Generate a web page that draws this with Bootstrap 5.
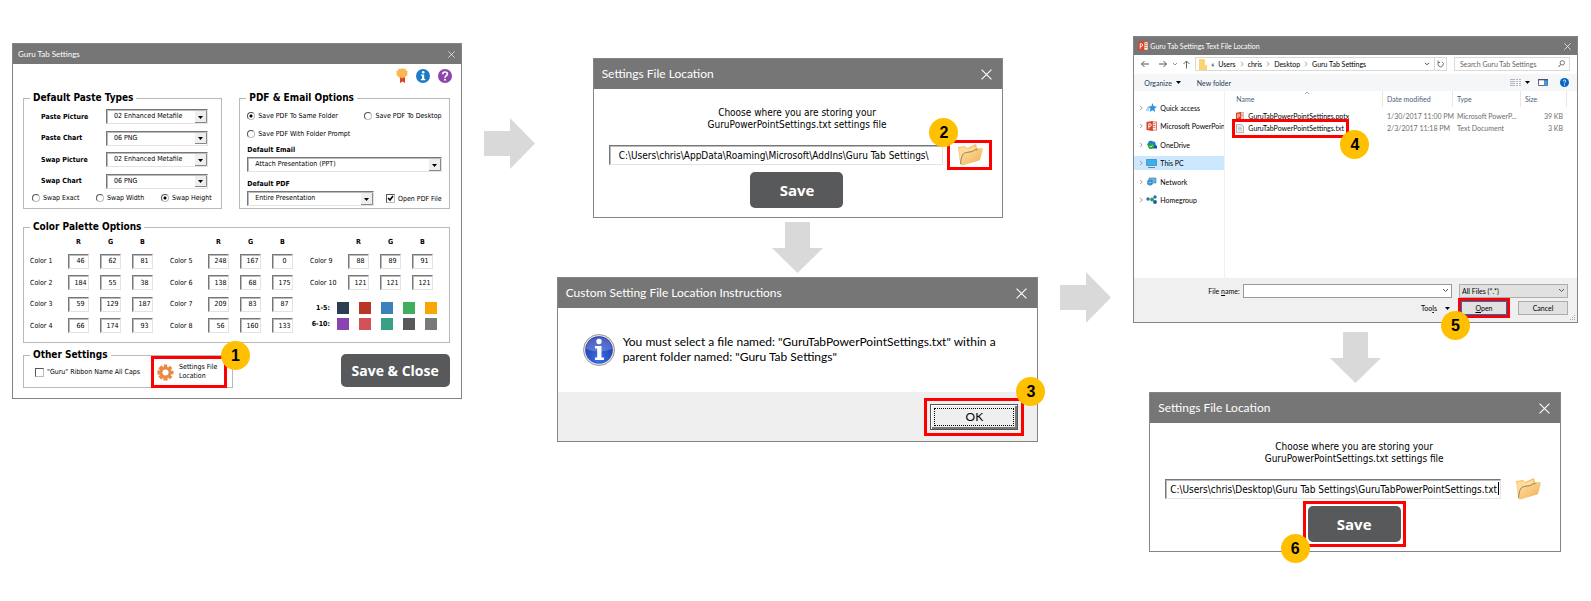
<!DOCTYPE html>
<html lang="en">
<head>
<meta charset="utf-8">
<meta name="viewport" content="width=device-width, initial-scale=1">
<title>Settings file location – steps</title>
<link href="https://cdn.jsdelivr.net/npm/bootstrap@5.3.0/dist/css/bootstrap.min.css" rel="stylesheet">
<style>
:root{--ui:Lato,"Open Sans",sans-serif;--form:"DejaVu Sans Condensed","DejaVu Sans",sans-serif;--bar:#767676}
body{background:#fff;color:#000;font-family:var(--form);font-size:10px;line-height:12px}
svg{display:block;flex:none}
button,input,select{font:inherit;color:inherit;padding:0;border:0;background:none;border-radius:0}
a{color:inherit;text-decoration:none}
.flow{display:grid;grid-template-columns:449fr 51px 481fr 51px 444fr;column-gap:22px;align-items:start;padding:36px 13px 20px 12px}
.from-1{margin-top:7px}.from-a{margin-top:82px}.from-2{margin-top:22px}.from-b{margin-top:236px}
.win{border:1px solid #848484;background:#fff;min-width:0}
.win-bar{background:var(--bar);color:#fff;font-family:var(--ui);font-size:12px;height:30px;padding:0 10px 0 8px}
.win-bar.small-bar{font-size:8px;height:20px;padding:0 6px 0 5px}
.flagged{outline:3px solid #f00}
.step{position:absolute;z-index:2;width:29px;height:29px;border-radius:50%;background:#ffc000;color:#000;font:bold 16px/29px "Liberation Sans",sans-serif;text-align:center}
.step-1{right:-26px;top:-18px}.step-2{left:-21px;top:-25px}.step-3{right:-27px;top:-27px}
.step-4{right:-23px;bottom:-24px}.step-5{left:-20px;bottom:-25px}.step-6{left:-27px;bottom:-21px}
.dark-btn{background:#58595b;color:#fff;border-radius:5px;font:bold 15px/20px "Open Sans",sans-serif}
.sunk{border:1px solid #e3e3e3;border-top-color:#777;border-left-color:#777;box-shadow:inset 1px 1px 0 #bbb;background-color:#fff}

/* main settings form */
.tiny{font-size:7px;line-height:10px}
.tiny fieldset{border:1px solid #b9b9b9;min-width:0}
.tiny legend{float:none;width:auto;margin:0 0 0 6px;padding:0 3px;font-size:10px;line-height:14px;font-weight:bold}
.settings-body{padding:4px 11px 10px 10px}
.top-icons{height:15px;gap:8px;margin:0 -2px 8px 0}
.two-sets{display:grid;grid-template-columns:199fr 210fr;gap:17px}
.tiny select{appearance:none;height:15px;padding:0 14px 0 7px;line-height:11px;background:#fff url("data:image/svg+xml,%3Csvg xmlns='http://www.w3.org/2000/svg' width='12' height='12'%3E%3Cpath fill='%23eee' d='M0 0h12v12H0z'/%3E%3Cpath fill='none' stroke='%23888' d='M0 11.500h11.500V0'/%3E%3Cpath d='M3 5h5L5.500 8z'/%3E%3C/svg%3E") right center no-repeat}
.paste-grid{display:grid;grid-template-columns:65px 101fr 13fr;height:80px;align-content:space-between;align-items:center;padding:0 0 0 17px;margin-top:4px}
.paste-grid select{grid-column:2}
.paste-grid label{grid-column:1;font-weight:bold}
.swap-row{display:grid;grid-template-columns:64px 65px auto;padding:4px 0 4px 8px}
.opt{display:flex;align-items:center;gap:3px;white-space:nowrap}
.opt input{appearance:none;width:8px;height:8px;flex:none;border:1px solid #bbb;border-top-color:#555;border-left-color:#555;margin:0}
.opt input[type=radio]{border-radius:50%}
.opt input[type=radio]:checked{background:radial-gradient(circle,#000 0 1px,#fff 2px)}
.opt input[type=checkbox]{width:9px;height:9px}
.opt input[type=checkbox]:checked{background:url("data:image/svg+xml,%3Csvg xmlns='http://www.w3.org/2000/svg' viewBox='0 0 7 7'%3E%3Cpath fill='none' stroke='%23000' stroke-width='1.500' d='M1 3l2 2 3-4'/%3E%3C/svg%3E")}
.pdf-set{padding:6px 7px 2px}
.pdf-set .prompt{margin:8px 0 6px}
.pdf-set .control{margin-top:2px}
.pdf-set .next{margin-top:7px}
.palette-set{margin-top:11px}
.palette{display:flex;gap:17px;padding:3px 6px 8px}
.bottom-row{margin-top:5px}
.rgb{display:grid;grid-template-columns:27px repeat(3,21px);column-gap:11px;grid-auto-rows:15px;grid-template-rows:10px;height:96px;align-content:space-between;align-items:center;white-space:nowrap}
.rgb.short{height:53px}
.rgb b{text-align:center}
.rgb input{width:21px;height:15px;padding:0 0 0 4px;text-align:center}
.swatches{display:flex;align-items:center;gap:10px;height:12px;margin-bottom:4px}
.swatches b{width:20px;margin-right:-3px;text-align:right;white-space:nowrap}
.swatches i{width:12px;height:12px;flex:none}
.other-set{width:210px}
.other-row{height:20px;margin-bottom:5px;padding:0 8px 0 11px}
.gear-btn{width:70px;height:26px;gap:5px;padding-left:3px;line-height:9px;text-align:left;background:#fff}
.save-close{width:109px;height:33px;margin-top:6px;font-size:14px}

/* path dialogs */
.in-2{margin:0 35px 0 36px}.in-3{margin:0 17px 0 16px}
.path-body{padding:18px 13px 9px 11px}
.path-row{margin:12px 0 5px 4px;gap:7px}
.path-row input{width:100%;height:20px;padding:0 3px 0 9px;display:block}
.path-row input.scrolled{padding:0 3px;text-align:right}
.caret-bar{position:absolute;right:2px;top:3px;width:1px;height:13px;background:#000}
.folder-btn{width:39px;height:24px;padding-left:7px;display:block}
.save-btn{width:93px;height:36px}
.down{margin:4px auto}
.down.far{margin:9px auto}

/* message box */
.msg{font-family:var(--ui);font-size:12px;line-height:15px}
.msg-body{padding:26px 25px;gap:8px;height:84px}
.msg-foot{background:#efefef;padding:12px 19px 11px}
.ok-btn{width:88px;height:26px;background:#efefef;border:1px solid #555;box-shadow:inset 1px 1px 0 #fff,inset -2px -2px 0 #777;padding:3px}
.ok-btn span{display:block;border:1px dotted #000;line-height:16px}

/* file picker */
.picker{font-family:var(--ui);font-size:7px;line-height:10px}
.picker .win-bar{height:18px;padding:0 6px 0 4px;gap:2px}
.nav-row{height:19px;padding:0 7px 1px 6px;gap:4px}
.addr{height:14px;border:1px solid #d9d9d9;padding-left:3px;gap:4px;min-width:0}
.addr .reload{border-left:1px solid #d9d9d9;width:12px;height:12px;display:grid;place-items:center}
.find{width:116px;height:14px;border:1px solid #d9d9d9;margin-left:3px;padding:0 4px 0 5px}
.find input{width:90px;color:#666}
.find input::placeholder{color:#666;opacity:1}
.tools{height:17px;background:#f5f6f7;padding:0 8px 0 10px;color:#1e395b}
.side{width:91px;border-right:1px solid #f0f0f0;padding-top:10px}
.side ul{height:106px;margin:0;padding:0}
.side a{height:14px;padding-left:5px;gap:4px;white-space:nowrap;overflow:hidden;line-height:14px}
.side a.here{background:#cce8ff}
.side a svg:nth-child(2){margin:0 -1px 0 -1px}
.pane{min-height:187px;padding-right:10px}
.files{width:100%;table-layout:fixed;border-collapse:separate;border-spacing:0;color:#6d6d6d}
.files th{font-weight:normal;color:#4c607a;height:16px;padding:0 0 0 4px;border-right:1px solid #e8e8e8;position:relative}
.files th:first-child,.files td:first-child{padding-left:11px}
.files td{height:12px;padding:0 4px;white-space:nowrap}
.files tbody tr:first-child td{height:15px;padding-top:3px}
.files a{color:#000;gap:4px}
.sort-mark{position:absolute;left:79px;top:0}
.row-flag{position:absolute;left:7px;top:-3px;width:117px;height:19px;border:3px solid #f00}
.pick-foot{background:#f0f0f0;padding:6px 9px 6px;height:44px}
.pick-foot input,.pick-foot select{height:14px;border:1px solid #999;background-color:#fff}
.name-line{gap:3px;padding-left:65px}
.name-line select,.name-line input{appearance:none;background-image:url("data:image/svg+xml,%3Csvg xmlns='http://www.w3.org/2000/svg' width='10' height='6'%3E%3Cpath fill='none' stroke='%23555' d='M2 1l2.500 2.500L7 1'/%3E%3C/svg%3E");background-repeat:no-repeat;background-position:right center}
.name-line select{width:109px;margin-left:4px;padding-left:2px;background-color:#e1e1e1;border-color:#adadad}
.act-line{gap:11px;margin-top:3px}
.act-line button.plain{width:46px;height:14px;background:#e1e1e1;border:1px solid #adadad;line-height:12px}
.act-line button.go{border-color:#0078d7}
.act-line button.wide{width:50px}
.grip{position:absolute;right:1px;bottom:1px}
</style>
</head>
<body>
<svg width="0" height="0" class="position-absolute" aria-hidden="true">
  <defs>
    <linearGradient id="paper" x1="0" y1="0" x2="1" y2="1"><stop offset="0" stop-color="#ffe3a6"/><stop offset="1" stop-color="#f0ae50"/></linearGradient>
    <radialGradient id="ball" cx=".5" cy=".8" r=".9"><stop offset="0" stop-color="#3d74e8"/><stop offset="1" stop-color="#12259b"/></radialGradient>
    <symbol id="x" viewBox="0 0 10 10"><path d="M.5.5l9 9M9.500.5l-9 9" stroke="#fff" fill="none"/></symbol>
    <symbol id="folder" viewBox="0 0 26 22">
      <path d="M1 3l7-1 2 2 9-4 1 4 5 .5-3 12-17 5L3 18z" fill="#f5c06c"/>
      <path d="M2 4l6-1 2 2 8-3 1 4-13 3-3 9z" fill="#ffdc98"/>
      <path d="M3.500 21.500C4 15 4 9 9 8l6-1 2-2 9-.5-3 11.500z" fill="url(#paper)"/>
      <path d="M3.500 20C4 14 5 9 9.500 8.500l6-1 2-1.500 3-.3" fill="none" stroke="#77705a" stroke-width=".8"/>
    </symbol>
    <symbol id="ppt" viewBox="0 0 11 11"><path d="M5 1h6v9H5z" fill="#fff" stroke="#d24726" stroke-width=".8"/><path d="M7 3h3M7 5h3M7 7h3" stroke="#d24726" stroke-width=".8"/><path d="M0 1l7-1v11l-7-1z" fill="#d24726"/><path d="M2.500 8.500V3h1.300a1.300 1.500 0 010 3H2.500" fill="none" stroke="#fff"/></symbol>
    <symbol id="chev" viewBox="0 0 4 6"><path d="M1 .8L3.200 3 1 5.200" fill="none" stroke="#888" stroke-width=".8"/></symbol>
    <symbol id="tri" viewBox="0 0 5 3"><path d="M0 0h5L2.500 3z"/></symbol>
  </defs>
</svg>

<main class="flow">
  <!-- 1: settings form -->
  <section class="win from-1">
    <header class="win-bar small-bar d-flex align-items-center justify-content-between"><span>Guru Tab Settings</span><button aria-label="Close"><svg width="7" height="7"><use href="#x"/></svg></button></header>
    <form class="settings-body tiny">
      <div class="top-icons d-flex justify-content-end align-items-center">
        <svg width="12" height="15" viewBox="0 0 12 15"><path d="M4 8h5v7l-2.500-1.500L4 15z" fill="#d9432a"/><path d="M6 0l1.500 1 2-.2.600 1.700 1.700 1-.6 1.700.4 2-1.700.8-.8 1.700-1.900-.3L6 10.500l-1.300-1-1.900.3L2 8 .4 7.200l.4-2L.2 3.500l1.700-1L2.500.8l2 .2z" fill="#fbb84f"/></svg>
        <svg width="14" height="14" viewBox="0 0 14 14"><circle cx="7" cy="7" r="7" fill="#1c7cc7"/><circle cx="7.200" cy="3.200" r="1.300" fill="#fff"/><path d="M5 5.500h3.200V10H9.300v1.300H4.800V10H6V6.800H5z" fill="#fff"/></svg>
        <svg width="14" height="14" viewBox="0 0 14 14"><circle cx="7" cy="7" r="7" fill="#8e44ad"/><path d="M4.700 5.300C4.700 3.500 5.800 3 7 3s2.400.7 2.400 2C9.400 6.700 7 6.700 7 8.700" fill="none" stroke="#fff" stroke-width="1.700"/><circle cx="7" cy="10.700" r="1" fill="#fff"/></svg>
      </div>
      <div class="two-sets">
        <fieldset>
          <legend>Default Paste Types</legend>
          <div class="paste-grid">
            <label for="pp">Paste Picture</label><select id="pp" class="sunk"><option>02 Enhanced Metafile</option></select>
            <label for="pc">Paste Chart</label><select id="pc" class="sunk"><option>06 PNG</option></select>
            <label for="sp">Swap Picture</label><select id="sp" class="sunk"><option>02 Enhanced Metafile</option></select>
            <label for="sc">Swap Chart</label><select id="sc" class="sunk"><option>06 PNG</option></select>
          </div>
          <div class="swap-row">
            <label class="opt"><input type="radio" name="swap">Swap Exact</label>
            <label class="opt"><input type="radio" name="swap">Swap Width</label>
            <label class="opt"><input type="radio" name="swap" checked>Swap Height</label>
          </div>
        </fieldset>
        <fieldset>
          <legend>PDF &amp; Email Options</legend>
          <div class="pdf-set">
            <div class="d-flex justify-content-between"><label class="opt"><input type="radio" name="pdf" checked>Save PDF To Same Folder</label><label class="opt"><input type="radio" name="pdf">Save PDF To Desktop</label></div>
            <label class="opt prompt"><input type="radio" name="pdf">Save PDF With Folder Prompt</label>
            <label class="fw-bold d-block" for="em">Default Email</label>
            <select id="em" class="sunk d-block w-100 control"><option>Attach Presentation (PPT)</option></select>
            <label class="fw-bold d-block next" for="dp">Default PDF</label>
            <div class="d-flex justify-content-between control"><select id="dp" class="sunk" style="width:65%"><option>Entire Presentation</option></select><label class="opt"><input type="checkbox" checked>Open PDF File</label></div>
          </div>
        </fieldset>
      </div>
      <fieldset class="palette-set">
        <legend>Color Palette Options</legend>
        <div class="palette" id="palette"></div>
      </fieldset>
      <div class="bottom-row d-flex justify-content-between">
        <fieldset class="other-set">
          <legend>Other Settings</legend>
          <div class="other-row d-flex align-items-center justify-content-between">
            <label class="opt"><input type="checkbox">"Guru" Ribbon Name All Caps</label>
            <div class="position-relative">
              <button type="button" class="gear-btn flagged d-flex align-items-center">
                <svg width="17" height="17" viewBox="-8.500 -8.500 17 17"><g fill="#e98b43"><path d="M-1.700-8h3.400l.5 16h-4.400z"/><path d="M-1.700-8h3.400l.5 16h-4.400z" transform="rotate(45)"/><path d="M-1.700-8h3.400l.5 16h-4.400z" transform="rotate(90)"/><path d="M-1.700-8h3.400l.5 16h-4.400z" transform="rotate(135)"/><circle r="5.800"/></g><circle r="3" fill="#fff"/></svg>
                <span>Settings File<br>Location</span>
              </button>
              <span class="step step-1">1</span>
            </div>
          </div>
        </fieldset>
        <button type="button" class="dark-btn save-close">Save &amp; Close</button>
      </div>
    </form>
  </section>

  <svg class="from-a" width="51" height="51"><path d="M0 13h26V0l25 25.500L26 51V38H0z" fill="#d9d9d9"/></svg>

  <!-- 2 and 3 -->
  <div class="from-2">
    <section class="win in-2">
      <header class="win-bar d-flex align-items-center justify-content-between"><span>Settings File Location</span><button aria-label="Close"><svg width="11" height="11"><use href="#x"/></svg></button></header>
      <div class="path-body">
        <label class="d-block text-center" for="path1">Choose where you are storing your<br>GuruPowerPointSettings.txt settings file</label>
        <div class="path-row d-flex align-items-center">
          <div class="flex-fill"><input id="path1" class="sunk" type="text" value="C:\Users\chris\AppData\Roaming\Microsoft\AddIns\Guru Tab Settings\"></div>
          <div class="position-relative"><button class="folder-btn flagged" aria-label="Browse"><svg width="26" height="22"><use href="#folder"/></svg></button><span class="step step-2">2</span></div>
        </div>
        <button class="dark-btn save-btn d-block mx-auto">Save</button>
      </div>
    </section>
    <svg class="down" width="51" height="51"><path d="M13 0v26H0l25.500 25L51 26H38V0z" fill="#d9d9d9"/></svg>
    <section class="win">
      <header class="win-bar d-flex align-items-center justify-content-between"><span>Custom Setting File Location Instructions</span><button aria-label="Close"><svg width="11" height="11"><use href="#x"/></svg></button></header>
      <div class="msg">
        <div class="msg-body d-flex">
          <svg width="32" height="32" viewBox="0 0 32 32"><circle cx="16" cy="16" r="15.500" fill="#e4e4e4" stroke="#999"/><circle cx="16" cy="16" r="13.800" fill="url(#ball)"/><path d="M3 15a13 12 0 0126 0q-13 5-26 0z" fill="#fff" opacity=".22"/><circle cx="16" cy="7.500" r="2.700" fill="#fff"/><path d="M12 12h6.500v11.500H21V26h-9v-2.500h2.200v-9H12z" fill="#fff"/></svg>
          <div>You must select a file named: "GuruTabPowerPointSettings.txt" within a<br>parent folder named: "Guru Tab Settings"</div>
        </div>
        <div class="msg-foot d-flex justify-content-end"><div class="position-relative"><button class="ok-btn flagged d-block" style="outline-offset:3px"><span>OK</span></button><span class="step step-3">3</span></div></div>
      </div>
    </section>
  </div>

  <svg class="from-b" width="51" height="51"><path d="M0 13h26V0l25 25.500L26 51V38H0z" fill="#d9d9d9"/></svg>

  <!-- 4, 5 and 6 -->
  <div>
    <section class="win picker position-relative">
      <header class="win-bar small-bar d-flex align-items-center"><svg width="10" height="10"><use href="#ppt"/></svg><span class="flex-fill picker">Guru Tab Settings Text File Location</span><button aria-label="Close"><svg width="7" height="7"><use href="#x"/></svg></button></header>
      <div class="nav-row d-flex align-items-center">
        <svg width="10" height="8" viewBox="0 0 10 8"><path d="M9 4H1.500M4.500 1l-3 3 3 3" fill="none" stroke="#555"/></svg>
        <svg class="ms-1" width="10" height="8" viewBox="0 0 10 8"><path d="M1 4h7.500M5.500 1l3 3-3 3" fill="none" stroke="#555"/></svg>
        <svg width="6" height="4" viewBox="0 0 6 4"><path d="M1 1l2 2 2-2" fill="none" stroke="#777" stroke-width=".8"/></svg>
        <svg width="9" height="9" viewBox="0 0 9 9"><path d="M4.500 8.500V1M1.500 4l3-3 3 3" fill="none" stroke="#666"/></svg>
        <div class="addr d-flex align-items-center flex-fill">
          <svg width="8" height="11" viewBox="0 0 8 11"><path d="M0 0h5l1 1v5h2v5H0z" fill="#fbd66e"/></svg>
          <span>«</span><a href="#">Users</a><svg width="4" height="6"><use href="#chev"/></svg><a href="#">chris</a><svg width="4" height="6"><use href="#chev"/></svg><a href="#">Desktop</a><svg width="4" height="6"><use href="#chev"/></svg><a href="#">Guru Tab Settings</a>
          <svg class="ms-auto" width="6" height="4" viewBox="0 0 6 4"><path d="M1 .8l2 2 2-2" fill="none" stroke="#444"/></svg>
          <button class="reload" aria-label="Refresh"><svg width="7" height="8" viewBox="0 0 7 8"><path d="M5 1.800A2.700 2.700 0 112 2M1 .5v2h2" fill="none" stroke="#555" stroke-width=".8"/></svg></button>
        </div>
        <div class="find d-flex align-items-center justify-content-between"><input type="search" aria-label="Search" placeholder="Search Guru Tab Settings"><svg width="7" height="8" viewBox="0 0 7 8"><circle cx="4.300" cy="2.800" r="2.200" fill="none" stroke="#555" stroke-width=".8"/><path d="M2.700 4.500L.5 7" stroke="#555"/></svg></div>
      </div>
      <div class="tools d-flex align-items-center">
        <button class="d-flex align-items-center gap-1">Organize <svg width="5" height="3"><use href="#tri"/></svg></button>
        <button class="ms-3">New folder</button>
        <svg class="ms-auto" width="11" height="7" viewBox="0 0 11 7"><path d="M0 .5h5M0 2.500h5M0 4.500h5M0 6.500h5M6 .5h2M6 2.500h2M6 4.500h2M6 6.500h2M9 .5h2M9 2.500h2M9 4.500h2M9 6.500h2" stroke="#a9aeb5" stroke-width=".9"/></svg>
        <svg class="ms-1" width="5" height="3"><use href="#tri"/></svg>
        <svg class="ms-2 me-1" width="10" height="7" viewBox="0 0 10 7"><path d="M.5.5h9v6h-9z" fill="#fff" stroke="#667"/><path d="M6 1h3.500v5.500H6z" fill="#3f9be8"/><path d="M0 .8h10" stroke="#445"/></svg>
        <svg class="ms-2" width="9" height="9" viewBox="0 0 9 9"><circle cx="4.500" cy="4.500" r="4.500" fill="#0a62c4"/><path d="M3.200 3.400c0-1 .6-1.400 1.300-1.400s1.300.5 1.300 1.200C5.800 4.200 4.500 4.200 4.500 5.500" fill="none" stroke="#fff" stroke-width=".9"/><circle cx="4.500" cy="6.900" r=".6" fill="#fff"/></svg>
      </div>
      <div class="d-flex">
        <nav class="side flex-shrink-0"><ul class="list-unstyled d-flex flex-column justify-content-between">
          <li><a href="#" class="d-flex align-items-center"><svg width="4" height="6"><use href="#chev"/></svg><svg width="11" height="10" viewBox="0 0 11 10"><path d="M6.500 0l1.200 3.300 3.300.2L8.400 5.700l.9 3.400-2.800-1.900-2.900 1.900.9-3.400L2 3.500l3.300-.2z" fill="#2b93dd"/><path d="M1 5h2M0 7h3" stroke="#2b93dd" stroke-width=".8"/></svg>Quick access</a></li>
          <li><a href="#" class="d-flex align-items-center"><svg width="4" height="6"><use href="#chev"/></svg><svg width="11" height="10"><use href="#ppt"/></svg>Microsoft PowerPoin</a></li>
          <li><a href="#" class="d-flex align-items-center"><svg width="4" height="6"><use href="#chev"/></svg><svg width="11" height="9" viewBox="0 0 11 9"><path d="M2 6a2 2 0 010-3 3 3 0 015-1.500 2 2 0 012.500 2L10 6z" fill="#1a7fd4"/><circle cx="5" cy="6" r="3" fill="#23a637"/><path d="M3.500 6l1.200 1.200L6.600 5" fill="none" stroke="#fff" stroke-width=".8"/><path d="M7 8.500h3a1.500 1.500 0 000-3H8.500" fill="#0d55a8"/></svg>OneDrive</a></li>
          <li><a href="#" class="d-flex align-items-center here"><svg width="4" height="6"><use href="#chev"/></svg><svg width="11" height="9" viewBox="0 0 11 9"><path d="M.5.5h10v6H.5z" fill="#36b3ee" stroke="#4a7ba0" stroke-width=".7"/><path d="M2 8.500h7" stroke="#5a87a8"/></svg>This PC</a></li>
          <li><a href="#" class="d-flex align-items-center"><svg width="4" height="6"><use href="#chev"/></svg><svg width="11" height="9" viewBox="0 0 11 9"><path d="M3 1h7v5H3z" fill="#6ab4e0" stroke="#3579a8" stroke-width=".6"/><circle cx="4" cy="5.500" r="3" fill="#2a86c8"/><path d="M1 5.500h6M4 2.500v6" stroke="#9bd0f0" stroke-width=".6"/></svg>Network</a></li>
          <li><a href="#" class="d-flex align-items-center"><svg width="4" height="6"><use href="#chev"/></svg><svg width="11" height="9" viewBox="0 0 11 9"><circle cx="2" cy="4" r="1.700" fill="#1b6fc0"/><circle cx="6" cy="4.500" r="2" fill="#27a845"/><circle cx="9" cy="2" r="1.700" fill="#1b6fc0"/><circle cx="9" cy="7" r="1.900" fill="#1a55a8"/></svg>Homegroup</a></li>
        </ul></nav>
        <div class="pane flex-fill">
          <table class="files">
            <colgroup><col><col style="width:70px"><col style="width:68px"><col style="width:46px"></colgroup>
            <thead><tr><th scope="col">Name<svg class="sort-mark" width="6" height="4" viewBox="0 0 6 4"><path d="M1 3l2-2 2 2" fill="none" stroke="#888" stroke-width=".7"/></svg></th><th scope="col">Date modified</th><th scope="col">Type</th><th scope="col">Size</th></tr></thead>
            <tbody>
              <tr><td><a href="#" class="d-flex align-items-center"><svg width="8" height="8"><use href="#ppt"/></svg>GuruTabPowerPointSettings.pptx</a></td><td>1/30/2017 11:00 PM</td><td>Microsoft PowerP...</td><td class="text-end">39 KB</td></tr>
              <tr><td class="position-relative"><a href="#" class="d-flex align-items-center"><svg width="8" height="9" viewBox="0 0 8 9"><path d="M.5.5h5l2 2v6h-7z" fill="#eee" stroke="#999" stroke-width=".7"/><path d="M2 3h4M2 4.500h4M2 6h4" stroke="#aaa" stroke-width=".6"/></svg>GuruTabPowerPointSettings.txt</a><span class="row-flag"><span class="step step-4">4</span></span></td><td>2/3/2017 11:18 PM</td><td>Text Document</td><td class="text-end">3 KB</td></tr>
            </tbody>
          </table>
        </div>
      </div>
      <div class="pick-foot">
        <div class="name-line d-flex align-items-center"><label for="fn">File <u>n</u>ame:</label><input id="fn" type="text" class="flex-fill"><select aria-label="File type"><option>All Files (*.*)</option></select></div>
        <div class="act-line d-flex align-items-center justify-content-end">
          <button class="d-flex align-items-center gap-2"><span>Too<u>l</u>s</span><svg width="5" height="3"><use href="#tri"/></svg></button>
          <div class="position-relative"><button class="plain go flagged d-block"><u>O</u>pen</button><span class="step step-5">5</span></div>
          <button class="plain wide">Cancel</button>
        </div>
      </div>
      <svg class="grip" width="6" height="6" viewBox="0 0 6 6"><path d="M4 0h1v1H4zM4 2h1v1H4zM4 4h1v1H4zM2 2h1v1H2zM2 4h1v1H2zM0 4h1v1H0z" fill="#aaa"/></svg>
    </section>
    <svg class="down far" width="51" height="51"><path d="M13 0v26H0l25.500 25L51 26H38V0z" fill="#d9d9d9"/></svg>
    <section class="win in-3">
      <header class="win-bar d-flex align-items-center justify-content-between"><span>Settings File Location</span><button aria-label="Close"><svg width="11" height="11"><use href="#x"/></svg></button></header>
      <div class="path-body">
        <label class="d-block text-center" for="path2">Choose where you are storing your<br>GuruPowerPointSettings.txt settings file</label>
        <div class="path-row d-flex align-items-center">
          <div class="flex-fill position-relative"><input id="path2" class="sunk scrolled" type="text" value="C:\Users\chris\Desktop\Guru Tab Settings\GuruTabPowerPointSettings.txt"><span class="caret-bar"></span></div>
          <button class="folder-btn" aria-label="Browse"><svg width="26" height="22"><use href="#folder"/></svg></button>
        </div>
        <div class="position-relative mx-auto save-btn flagged" style="outline-offset:2px"><button class="dark-btn save-btn d-block">Save</button><span class="step step-6">6</span></div>
      </div>
    </section>
  </div>
</main>
<script src="https://cdn.jsdelivr.net/npm/bootstrap@5.3.0/dist/js/bootstrap.bundle.min.js"></script>
<script>
const colors=[[46,62,81],[184,55,38],[59,129,187],[66,174,93],[248,167,0],[138,68,175],[209,83,87],[56,160,133],[88,89,91],[121,121,121]];
const group=(from,to)=>'<span></span><b>R</b><b>G</b><b>B</b>'+colors.slice(from,to).map((c,i)=>
  `<span>Color ${from+i+1}</span>`+c.map((v,k)=>`<input class="sunk" type="text" aria-label="Color ${from+i+1} ${'RGB'[k]}" value="${v}">`).join('')).join('');
const row=(name,list)=>`<div class="swatches"><b>${name}</b>${list.map(c=>`<i style="background:rgb(${c})"></i>`).join('')}</div>`;
document.getElementById('palette').innerHTML=
  `<div class="rgb">${group(0,4)}</div><div class="rgb">${group(4,8)}</div>`+
  `<div><div class="rgb short mb-2">${group(8,10)}</div><div class="pt-1">${row('1-5:',colors.slice(0,5))}${row('6-10:',colors.slice(5))}</div></div>`;
const p=document.getElementById('path2');p.scrollLeft=p.scrollWidth;
</script>
</body>
</html>
